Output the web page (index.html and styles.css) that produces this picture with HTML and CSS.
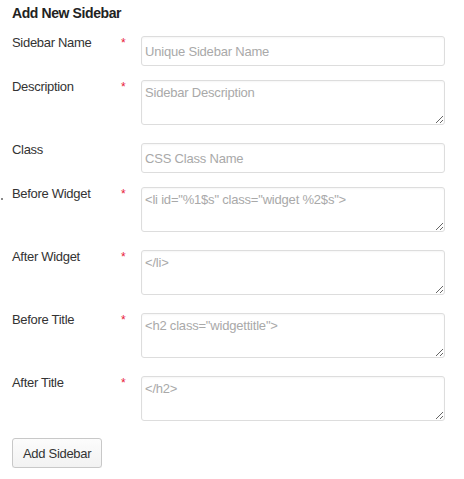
FILE: index.html
```html
<!DOCTYPE html>
<html>
<head>
<meta charset="utf-8">
<link rel="stylesheet" href="styles.css">
</head>
<body>
<div class="panel">
  <h3 class="title">Add New Sidebar</h3>
  <form class="form">
    <div class="row">
      <label class="label">Sidebar Name</label>
      <span class="req">*</span>
      <input class="field" type="text" placeholder="Unique Sidebar Name">
    </div>
    <div class="row row-area">
      <label class="label">Description</label>
      <span class="req">*</span>
      <textarea class="area" placeholder="Sidebar Description"></textarea>
    </div>
    <div class="row">
      <label class="label">Class</label>
      <span class="req"></span>
      <input class="field" type="text" placeholder="CSS Class Name">
    </div>
    <div class="row row-area">
      <label class="label">Before Widget</label>
      <span class="req">*</span>
      <textarea class="area" placeholder="&lt;li id=&quot;%1$s&quot; class=&quot;widget %2$s&quot;&gt;"></textarea>
      <span class="dot"></span>
    </div>
    <div class="row row-area">
      <label class="label">After Widget</label>
      <span class="req">*</span>
      <textarea class="area" placeholder="&lt;/li&gt;"></textarea>
    </div>
    <div class="row row-area">
      <label class="label">Before Title</label>
      <span class="req">*</span>
      <textarea class="area" placeholder="&lt;h2 class=&quot;widgettitle&quot;&gt;"></textarea>
    </div>
    <div class="row row-area last">
      <label class="label">After Title</label>
      <span class="req">*</span>
      <textarea class="area" placeholder="&lt;/h2&gt;"></textarea>
    </div>
    <button class="btn" type="button">Add Sidebar</button>
  </form>
</div>
</body>
</html>
```

FILE: styles.css
```css
html, body {
  margin: 0;
  padding: 0;
  background: #fff;
}
body {
  font-family: "Liberation Sans", Arial, sans-serif;
  font-size: 13px;
  color: #333;
}
.panel {
  padding: 4px 19px 0 12px;
}
.title {
  margin: 0 0 14px;
  font-size: 14px;
  line-height: 18px;
  font-weight: bold;
  color: #222;
  letter-spacing: -0.4px;
}
.form {
  margin: 0;
}
.row {
  position: relative;
  display: grid;
  grid-template-columns: 109px 20px 1fr;
  align-items: start;
  margin-bottom: 14px;
}
.row-area {
  margin-bottom: 18px;
}
.row-area.last {
  margin-bottom: 17px;
}
.label {
  font-size: 13px;
  line-height: 14px;
  color: #333;
  letter-spacing: -0.3px;
}
.req {
  color: #e8203a;
  font-size: 12px;
  line-height: 14px;
}
.field,
.area {
  box-sizing: border-box;
  width: 100%;
  margin: 0;
  border: 1px solid #dddddd;
  border-radius: 3px;
  background: #fff;
  font-family: "Liberation Sans", Arial, sans-serif;
  font-size: 13px;
  letter-spacing: -0.2px;
  color: #333;
  box-shadow: inset 0 1px 2px rgba(0, 0, 0, 0.04);
  outline: none;
}
.field {
  height: 30px;
  padding: 0 3px;
  line-height: 28px;
}
.area {
  display: block;
  height: 45px;
  padding: 4px 3px;
  line-height: 15px;
  resize: vertical;
}
.field::placeholder,
.area::placeholder {
  color: #a9a9a9;
  opacity: 1;
}
.dot {
  position: absolute;
  left: -11px;
  top: 11px;
  width: 2px;
  height: 2px;
  background: #8a8a8a;
}
.btn {
  display: block;
  box-sizing: border-box;
  height: 30px;
  padding: 0 10px;
  white-space: nowrap;
  border: 1px solid #c8c8c8;
  border-radius: 3px;
  background: linear-gradient(#fcfcfc, #f2f2f2);
  font-family: "Liberation Sans", Arial, sans-serif;
  font-size: 13px;
  letter-spacing: -0.3px;
  color: #333;
  box-shadow: 0 1px 0 rgba(0, 0, 0, 0.05);
}
```
